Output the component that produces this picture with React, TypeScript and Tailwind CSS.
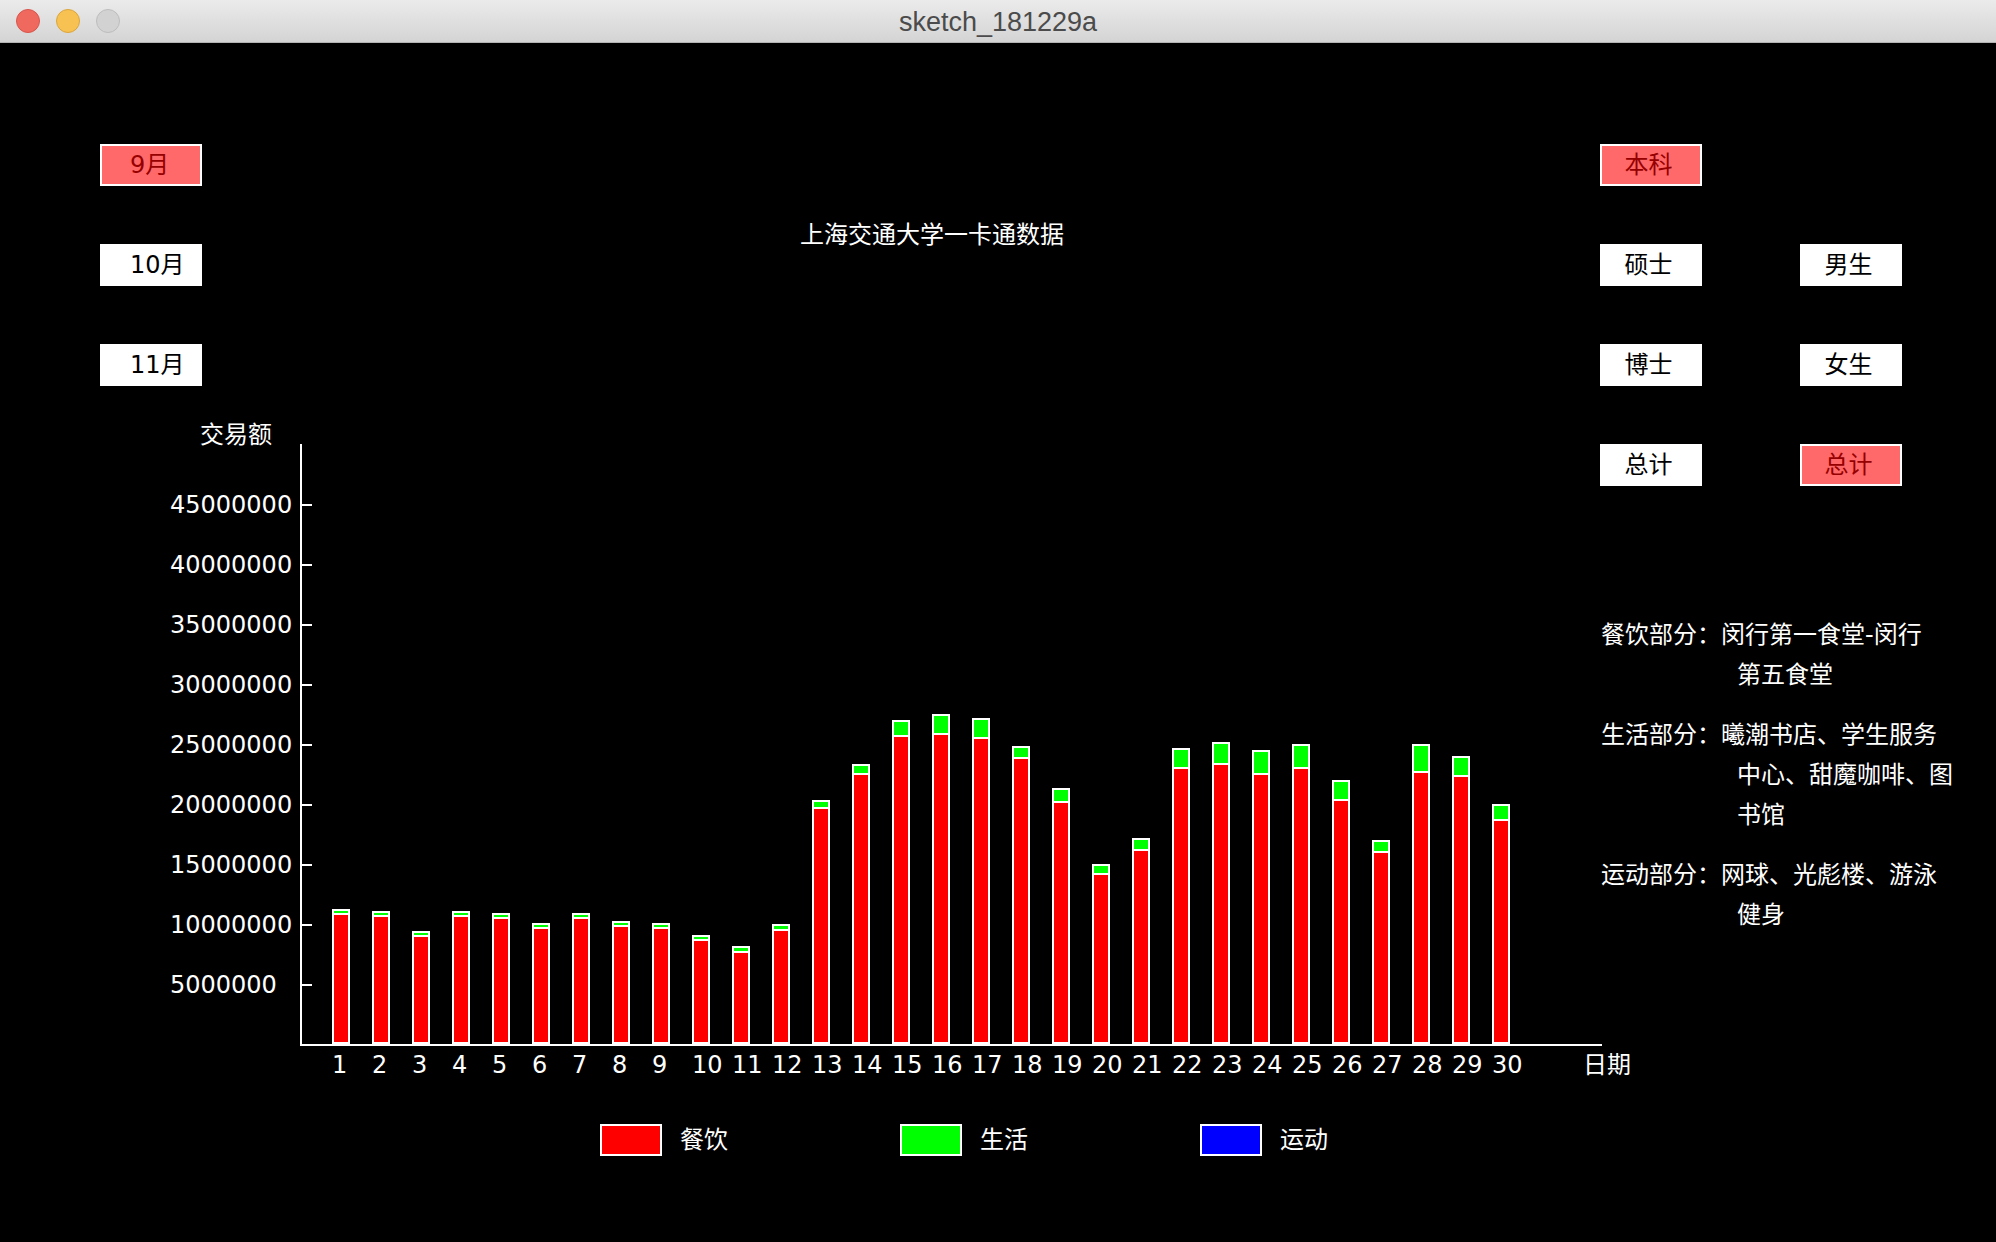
const months = [
  { label: "9月", on: true },
  { label: "10月", on: false },
  { label: "11月", on: false },
];

// 单位：万元
const dining = [
  1092, 1075, 908, 1075, 1058, 975, 1058, 992, 975, 875, 775, 958, 1975, 2258, 2575,
  2592, 2558, 2392, 2025, 1425, 1625, 2308, 2342, 2258, 2308, 2042, 1608, 2275, 2242, 1875,
];
const living = [
  33, 33, 33, 33, 33, 33, 33, 33, 33, 33, 42, 42, 58, 75, 125,
  158, 158, 92, 108, 75, 92, 158, 175, 192, 192, 158, 92, 225, 158, 125,
];

const ticks = [45000000, 40000000, 35000000, 30000000, 25000000, 20000000, 15000000, 10000000, 5000000];

const legend = [
  { label: "餐饮", color: "bg-[#ff0000]" },
  { label: "生活", color: "bg-[#00ff00]" },
  { label: "运动", color: "bg-[#0000ff]" },
];

const info = [
  { title: "餐饮部分：", lines: ["闵行第一食堂-闵行", "第五食堂"] },
  { title: "生活部分：", lines: ["曦潮书店、学生服务", "中心、甜魔咖啡、图", "书馆"] },
  { title: "运动部分：", lines: ["网球、光彪楼、游泳", "健身"] },
];

// 60px = 500万
const toPx = (v: number) => Math.round((v * 60) / 500);

function Btn({ label, on, center }: { label: string; on?: boolean; center?: boolean }) {
  return (
    <div
      className={`flex h-[42px] w-[102px] items-center border-2 border-white ${
        on ? "bg-[#ff6969] text-[#960000]" : "bg-white text-black"
      } ${center ? "justify-center pr-[5px]" : "pl-[28px]"}`}
    >
      {label}
    </div>
  );
}

function TitleBar() {
  return (
    <div className="grid h-[43px] shrink-0 grid-cols-[1fr_auto_1fr] items-center border-b border-[#b3b3b3] bg-linear-to-b from-[#ebebeb] to-[#d4d4d4]">
      <div className="flex gap-[16px] pl-[16px]">
        <span className="h-[24px] w-[24px] rounded-full border border-[#d8554b] bg-[#f0695f]" />
        <span className="h-[24px] w-[24px] rounded-full border border-[#dba53d] bg-[#f7c251]" />
        <span className="h-[24px] w-[24px] rounded-full border border-[#bdbdbd] bg-[#d2d2d2]" />
      </div>
      <div className="pt-[2px] font-['Liberation_Sans',sans-serif] text-[27px] leading-none text-[#4b4b4b]">
        sketch_181229a
      </div>
      <div />
    </div>
  );
}

export default function App() {
  return (
    <div className="flex h-[1242px] w-[1996px] flex-col overflow-hidden bg-black font-['DejaVu_Sans','Noto_Sans_CJK_SC',sans-serif] text-[24px] leading-[24px] text-white">
      <TitleBar />
      <div className="flex flex-1">
        {/* chart side */}
        <div className="flex w-[1600px] shrink-0 flex-col">
          <div className="mt-[101px] flex items-start">
            <div className="ml-[100px] flex flex-col gap-[58px]">
              {months.map((m) => (
                <Btn key={m.label} label={m.label} on={m.on} />
              ))}
            </div>
            <div className="ml-[598px] mt-[79px]">上海交通大学一卡通数据</div>
          </div>

          <div className="mt-[34px] flex">
            <div className="flex w-[300px] shrink-0 flex-col">
              <div className="mt-[3px] pl-[200px]">交易额</div>
              <div className="h-[28px]" />
              {ticks.map((v) => (
                <div key={v} className="flex h-[60px] items-center pl-[170px]">
                  <span>{v}</span>
                  <div className="-mr-[12px] ml-auto h-[2px] w-[12px] bg-white" />
                </div>
              ))}
            </div>
            <div className="mt-[24px] flex h-[602px] w-[1302px] shrink-0 items-end gap-[22px] border-b-2 border-l-2 border-white pl-[30px]">
              {dining.map((d, i) => (
                <div key={i} className="flex w-[18px] shrink-0 flex-col">
                  <div
                    className="border-2 border-b-0 border-white bg-[#00ff00]"
                    style={{ height: toPx(living[i]) }}
                  />
                  <div className="border-2 border-white bg-[#ff0000]" style={{ height: toPx(d) }} />
                </div>
              ))}
            </div>
          </div>

          <div className="mt-[7px] flex pl-[332px]">
            {dining.map((_, i) => (
              <div key={i} className="w-[40px] shrink-0">
                {i + 1}
              </div>
            ))}
            <div className="ml-[51px] shrink-0">日期</div>
          </div>

          <div className="mt-[47px] flex pl-[600px]">
            {legend.map((l) => (
              <div key={l.label} className="flex w-[300px] items-center gap-[18px]">
                <div className={`h-[32px] w-[62px] border-2 border-white ${l.color}`} />
                <span>{l.label}</span>
              </div>
            ))}
          </div>
        </div>

        {/* filters + notes */}
        <div className="flex flex-1 flex-col">
          <div className="mt-[101px] grid grid-cols-[102px_102px] gap-x-[98px] gap-y-[58px]">
            <Btn label="本科" on center />
            <div />
            <Btn label="硕士" center />
            <Btn label="男生" center />
            <Btn label="博士" center />
            <Btn label="女生" center />
            <Btn label="总计" center />
            <Btn label="总计" on center />
          </div>

          <div className="mt-[129px] flex flex-col gap-[20px] pl-[1px] leading-[40px]">
            {info.map((p) => (
              <div key={p.title}>
                <div>
                  {p.title}
                  {p.lines[0]}
                </div>
                {p.lines.slice(1).map((l) => (
                  <div key={l} className="pl-[136px]">
                    {l}
                  </div>
                ))}
              </div>
            ))}
          </div>
        </div>
      </div>
    </div>
  );
}
